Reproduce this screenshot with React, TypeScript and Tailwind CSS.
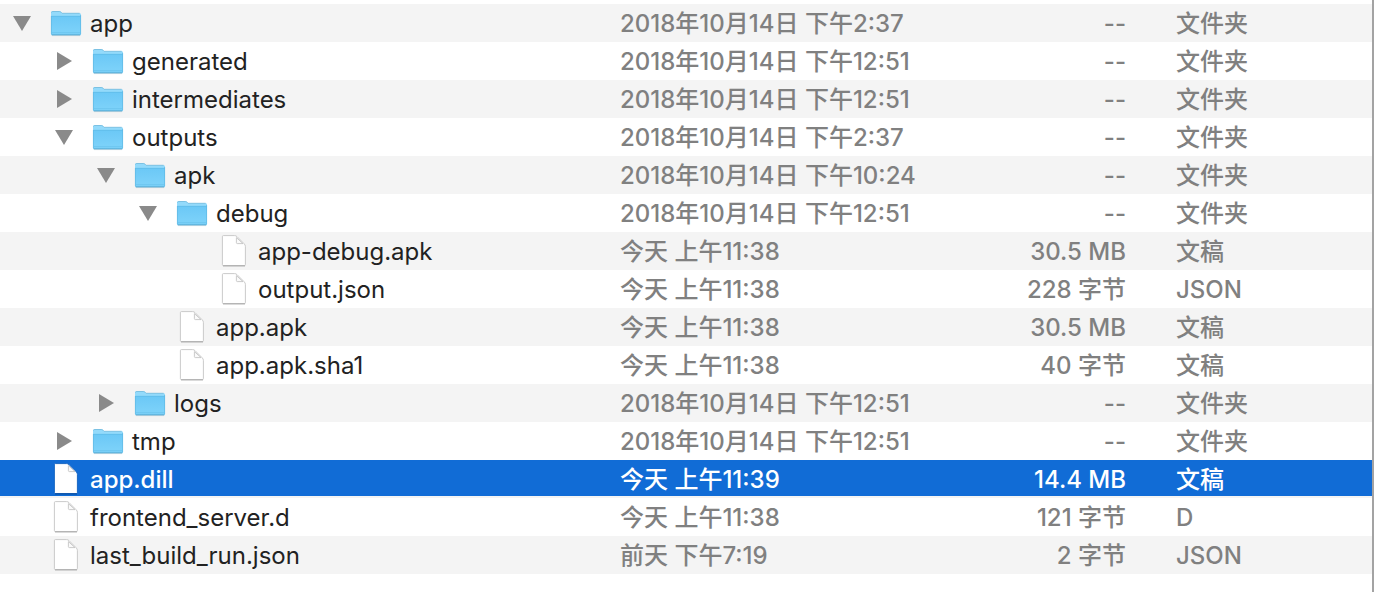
import { useState } from "react";
import clsx from "clsx";

type Entry = {
  name: string;
  date: string;
  size: string;
  kind: string;
  open?: boolean;
  children?: Entry[];
};

const entries: Entry[] = [
  {
    name: "app",
    date: "2018年10月14日 下午2:37",
    size: "--",
    kind: "文件夹",
    open: true,
    children: [
      { name: "generated", date: "2018年10月14日 下午12:51", size: "--", kind: "文件夹", children: [] },
      { name: "intermediates", date: "2018年10月14日 下午12:51", size: "--", kind: "文件夹", children: [] },
      {
        name: "outputs",
        date: "2018年10月14日 下午2:37",
        size: "--",
        kind: "文件夹",
        open: true,
        children: [
          {
            name: "apk",
            date: "2018年10月14日 下午10:24",
            size: "--",
            kind: "文件夹",
            open: true,
            children: [
              {
                name: "debug",
                date: "2018年10月14日 下午12:51",
                size: "--",
                kind: "文件夹",
                open: true,
                children: [
                  { name: "app-debug.apk", date: "今天 上午11:38", size: "30.5 MB", kind: "文稿" },
                  { name: "output.json", date: "今天 上午11:38", size: "228 字节", kind: "JSON" },
                ],
              },
              { name: "app.apk", date: "今天 上午11:38", size: "30.5 MB", kind: "文稿" },
              { name: "app.apk.sha1", date: "今天 上午11:38", size: "40 字节", kind: "文稿" },
            ],
          },
          { name: "logs", date: "2018年10月14日 下午12:51", size: "--", kind: "文件夹", children: [] },
        ],
      },
      { name: "tmp", date: "2018年10月14日 下午12:51", size: "--", kind: "文件夹", children: [] },
    ],
  },
  { name: "app.dill", date: "今天 上午11:39", size: "14.4 MB", kind: "文稿" },
  { name: "frontend_server.d", date: "今天 上午11:38", size: "121 字节", kind: "D" },
  { name: "last_build_run.json", date: "前天 下午7:19", size: "2 字节", kind: "JSON" },
];

const indents = ["pl-[12px]", "pl-[54px]", "pl-[96px]", "pl-[138px]", "pl-[180px]"];

function FolderIcon() {
  return (
    <svg viewBox="0 0 32 32" className="size-8 shrink-0" aria-hidden>
      <defs>
        <linearGradient id="folder-front" x1="0" y1="0" x2="0" y2="1">
          <stop offset="0" stopColor="#6bc8f6" />
          <stop offset="1" stopColor="#7fd3fa" />
        </linearGradient>
      </defs>
      <path d="M2 28.6h28" stroke="#000" strokeOpacity=".14" />
      <path
        d="M1 5.6Q1 4.3 2.3 4.3h7.4q.8 0 1.3.6l1.2 1.3h17.3q1.5 0 1.5 1.3V12H1z"
        fill="#93dafb"
      />
      <path d="M1.5 5.5q.2-1 1.2-1h7q.7 0 1.2.6l1.2 1.2h17.6" fill="none" stroke="#6fb9dc" strokeWidth=".8" />
      <path d="M1 9h30v18q0 1.2-1.2 1.2H2.2Q1 28.2 1 27z" fill="url(#folder-front)" />
      <path d="M1.4 9.3h29.2" stroke="#5bb7e4" strokeWidth=".6" />
      <path d="M1.4 9v18M30.6 8v19" stroke="#5fb8e2" strokeWidth=".7" />
      <path d="M2 25.7h28" stroke="#62bce9" strokeWidth=".6" />
      <path d="M1.6 27.8h28.8" stroke="#55a9d2" strokeWidth=".9" />
    </svg>
  );
}

function FileIcon({ selected }: { selected: boolean }) {
  return (
    <svg viewBox="0 0 32 32" className="size-8 shrink-0" aria-hidden>
      <path d="M5 31.3h22" stroke="#000" strokeOpacity=".15" />
      <path
        d="M5.4.6h11.2q1.4 0 2.4 1l7.2 7.2q1.2 1.2 1.2 2.6v18.2q0 1-1 1h-21q-1 0-1-1v-28q0-1 1-1z"
        fill="#fff"
        stroke={selected ? "#0f5fbe" : "#c4c4c4"}
        strokeWidth=".9"
      />
      <path d="M5 30.6h22" stroke={selected ? "#0b4fa5" : "#a9a9a9"} strokeWidth=".8" />
      <path d="M18.4 2.6v5q0 1 1 1h5.6z" fill="#fafafa" stroke="#c4c4c4" strokeWidth=".9" />
    </svg>
  );
}

type RowProps = {
  entry: Entry;
  depth: number;
  open: boolean;
  selected: boolean;
  onToggle: () => void;
  onSelect: () => void;
};

function Row({ entry, depth, open, selected, onToggle, onSelect }: RowProps) {
  return (
    <tr
      onClick={onSelect}
      aria-selected={selected}
      className={clsx(
        "h-[38px] font-medium whitespace-nowrap",
        selected
          ? "bg-[#116cd6] text-white shadow-[inset_0_-2px_0_#f4f4f4]"
          : "text-[#808080] odd:bg-[#f4f4f4]",
      )}
    >
      <td className="p-0">
        <div className={clsx("flex items-center", indents[depth])}>
          {entry.children ? (
            <button
              type="button"
              aria-label={entry.name}
              aria-expanded={open}
              onClick={onToggle}
              className="flex size-5 shrink-0 items-center justify-center"
            >
              <svg viewBox="0 0 20 20" className="size-5" fill="#8a8a8a" aria-hidden>
                {open ? <path d="M1 3h18l-9 15z" /> : <path d="M3 1v18l15-9z" />}
              </svg>
            </button>
          ) : (
            <span className="w-5 shrink-0" />
          )}
          <span className="ml-[18px] flex items-center gap-2">
            {entry.children ? <FolderIcon /> : <FileIcon selected={selected} />}
            <span className={clsx("pt-0.5", selected ? "text-white" : "font-normal text-[#222222]")}>
              {entry.name}
            </span>
          </span>
        </div>
      </td>
      <td className="p-0 pt-0.5">{entry.date}</td>
      <td className="p-0 pt-0.5 pr-[50px] text-right">{entry.size}</td>
      <td className="p-0 pt-0.5">{entry.kind}</td>
    </tr>
  );
}

export default function App() {
  const [selected, setSelected] = useState("app.dill");
  const [toggled, setToggled] = useState<string[]>([]);

  const toggle = (name: string) =>
    setToggled((prev) => (prev.includes(name) ? prev.filter((n) => n !== name) : [...prev, name]));

  const isOpen = (entry: Entry) => Boolean(entry.open) !== toggled.includes(entry.name);

  const flatten = (list: Entry[], depth = 0): { entry: Entry; depth: number }[] =>
    list.flatMap((entry) => [
      { entry, depth },
      ...(entry.children && isOpen(entry) ? flatten(entry.children, depth + 1) : []),
    ]);

  return (
    <main className="min-h-screen border-r-2 border-[#a3a3a3] bg-white pt-1 font-['Inter','Noto_Sans_CJK_SC',sans-serif] text-[24px] leading-8">
      <table className="w-full table-fixed border-collapse">
        <colgroup>
          <col />
          <col className="w-[380px]" />
          <col className="w-[176px]" />
          <col className="w-[196px]" />
        </colgroup>
        <tbody>
          {flatten(entries).map(({ entry, depth }) => (
            <Row
              key={entry.name}
              entry={entry}
              depth={depth}
              open={isOpen(entry)}
              selected={entry.name === selected}
              onToggle={() => toggle(entry.name)}
              onSelect={() => setSelected(entry.name)}
            />
          ))}
        </tbody>
      </table>
    </main>
  );
}
